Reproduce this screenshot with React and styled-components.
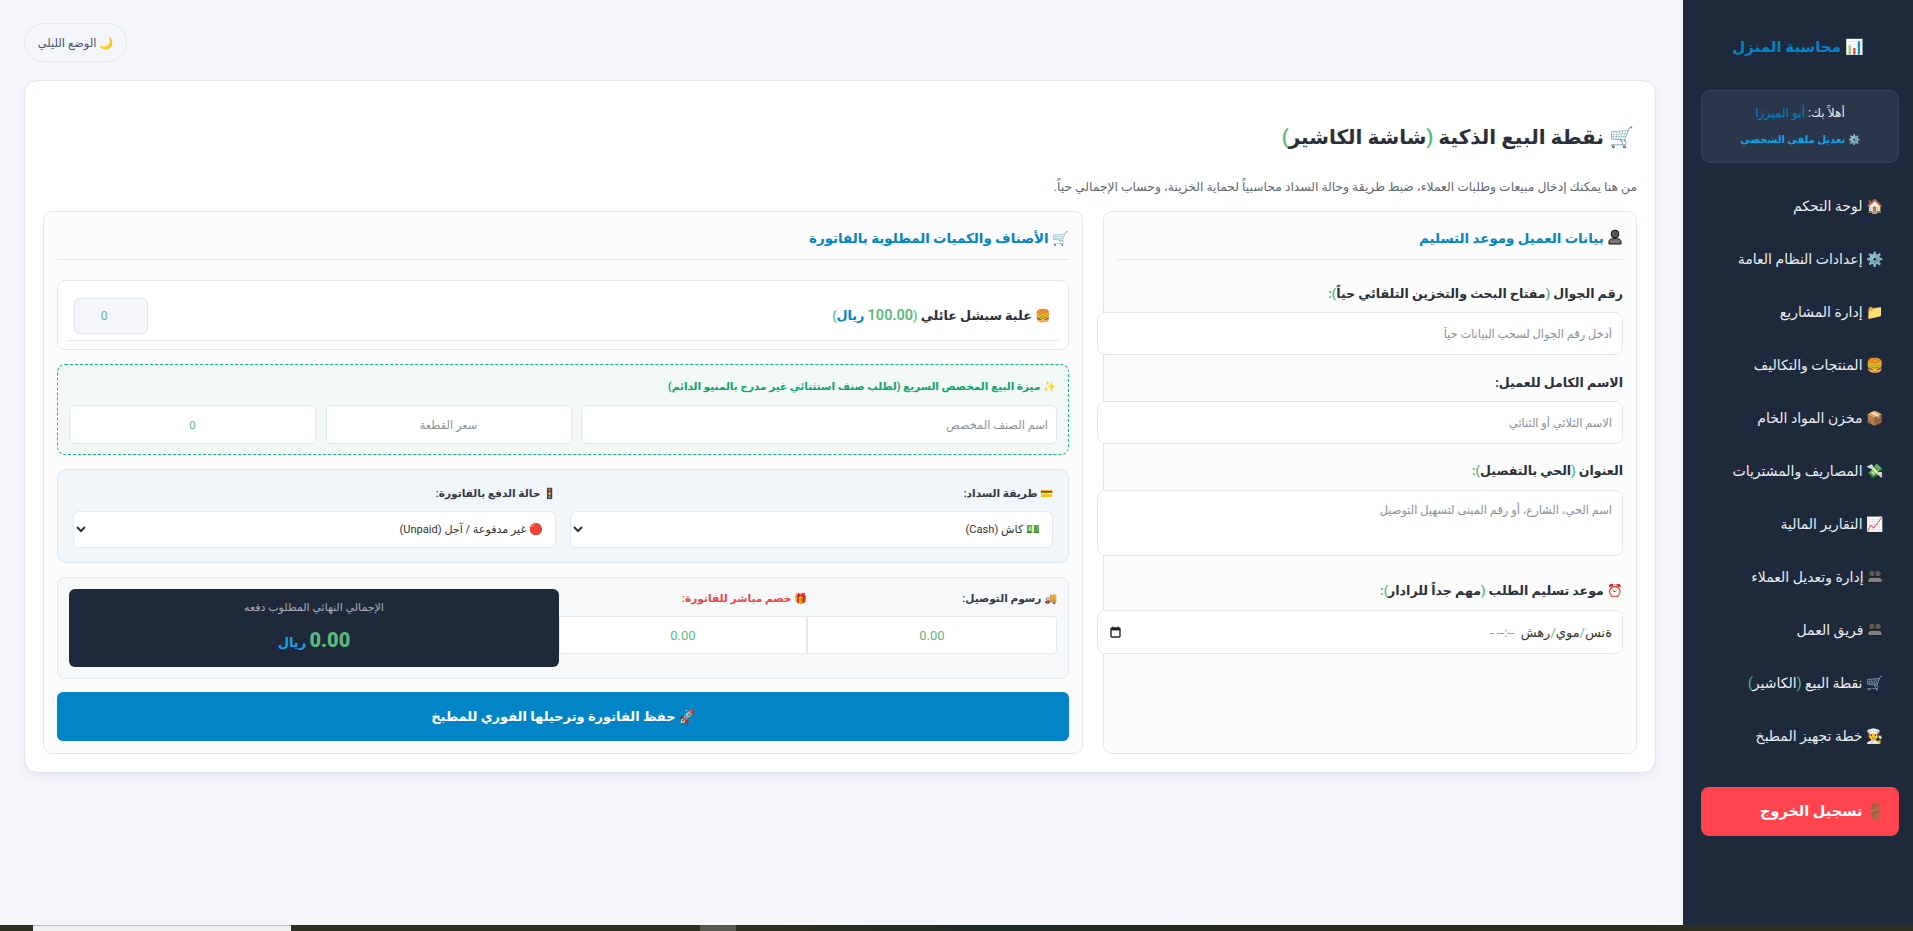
import React from 'react';
import styled, { createGlobalStyle } from 'styled-components';

const GlobalStyle = createGlobalStyle`
  html, body { margin: 0; padding: 0; height: 100%; overflow: hidden; background: #f4f6fb; }
  * { box-sizing: border-box; }
  body, input, select, textarea, button {
    font-family: Roboto, "DejaVu Sans", sans-serif;
  }
`;

const Page = styled.div`
  width: 1913px;
  height: 931px;
  display: flex;
  flex-direction: column;
`;
const Body = styled.div`
  flex: 1;
  min-height: 0;
  display: flex;
`;
const Main = styled.main`
  flex: 1;
  min-width: 0;
  padding: 23px 27px 0 24px;
  direction: rtl;
`;
const TopBar = styled.div`
  display: flex;
  justify-content: flex-end;
  margin-bottom: 18px;
`;
const ThemeToggle = styled.button`
  height: 39px;
  width: 103px;
  border: 1px solid #e2e8f0;
  border-radius: 20px;
  background: #f4f6fb;
  color: #475569;
  font-size: 11.5px;
  padding: 0;
`;
const Card = styled.section`
  background: #fff;
  border: 1px solid #e2e8f0;
  border-radius: 14px;
  box-shadow: 0 4px 10px rgba(30, 41, 59, 0.06);
  padding: 18px;
  height: 693px;
`;
const Title = styled.h1`
  margin: 22px 3px 0 0;
  height: 32px;
  font-size: 20px;
  line-height: 32px;
  font-weight: 700;
  color: #2b3038;
`;
const Sub = styled.p`
  margin: 22px 0 12px;
  height: 24px;
  font-size: 12.3px;
  line-height: 24px;
  color: #5f6773;
`;
const Columns = styled.div`
  display: grid;
  grid-template-columns: 534px 1040px;
  gap: 20px;
  height: 543px;
`;
const Col = styled.div`
  background: #fcfcfd;
  border: 1px solid #e2e8f0;
  border-radius: 9px;
  padding: 0 13px;
`;
const ColHead = styled.h2`
  margin: 0 0 ${p => p.$mb}px;
  height: 48px;
  line-height: 54px;
  font-size: 13.4px;
  font-weight: 700;
  color: #0284c7;
  border-bottom: 1px solid #e2e8f0;
`;
const Field = styled.div`
  margin-bottom: ${p => p.$mb}px;
`;
const Label = styled.label`
  display: block;
  height: 22px;
  line-height: 22px;
  margin-bottom: ${p => p.$mb || 7}px;
  font-size: 12.6px;
  font-weight: 700;
  color: #2b3038;
`;
const controlBase = `
  display: block;
  background: #fff;
  border: 1px solid #e2e8f0;
  color: #333;
  outline: none;
`;
const WideInput = styled.input`
  ${controlBase}
  width: calc(100% + 20px);
  height: 43px;
  border-radius: 8px;
  padding: 0 10px;
  font-size: 11.4px;
  &::placeholder { color: #8a8f98; opacity: 1; }
`;
const WideArea = styled.textarea`
  ${controlBase}
  width: calc(100% + 20px);
  height: 66px;
  border-radius: 8px;
  padding: 12px 10px;
  font-size: 11.4px;
  resize: none;
  &::placeholder { color: #8a8f98; opacity: 1; }
`;
const DateBox = styled.div`
  ${controlBase}
  width: calc(100% + 20px);
  height: 44px;
  border-radius: 8px;
  padding: 0 10px 0 12px;
  display: flex;
  align-items: center;
  justify-content: space-between;
  font-size: 13px;
`;
const Green = styled.span`
  color: #5cb97e;
`;
const Blue = styled.span`
  color: #0284c7;
`;
const Digits = styled(Green)`
  font-size: 14.5px;
`;
const DateDashes = styled(Green)`
  letter-spacing: 1.6px;
  margin-right: 3px;
`;
const ItemCard = styled.div`
  background: #fff;
  border: 1px solid #e2e8f0;
  border-radius: 8px;
  height: 70px;
  padding: 0 9px;
  margin-bottom: 14px;
`;
const ItemRow = styled.div`
  height: 60px;
  border-bottom: 1px solid #e2e8f0;
  padding: 10px 7px 0;
  display: flex;
  align-items: center;
  justify-content: space-between;
`;
const ItemName = styled.span`
  font-size: 12.7px;
  font-weight: 600;
  color: #2b3038;
  padding-right: 1px;
`;
const Qty = styled.input`
  ${controlBase}
  width: 74px;
  height: 36px;
  background: #f4f6fb;
  border-radius: 5px;
  text-align: center;
  padding: 0 14px 0 0;
  font-size: 12px;
  &::placeholder { color: #5cb97e; opacity: 1; }
`;
const CustomBox = styled.div`
  background: #f1f8f6;
  border: 1px dashed #10b981;
  border-radius: 8px;
  height: 91px;
  padding: 12px 11px 0;
  margin-bottom: 14px;
`;
const CustomTitle = styled.div`
  height: 20px;
  line-height: 20px;
  margin: 0 1px 8px 0;
  font-size: 10.5px;
  font-weight: 700;
  color: #10a56f;
`;
const CustomGrid = styled.div`
  display: grid;
  grid-template-columns: 476px 246px 247px;
  gap: 9.5px;
`;
const SmallInput = styled.input`
  ${controlBase}
  width: 100%;
  height: 39px;
  border-radius: 5px;
  padding: 0 8px;
  font-size: 11.4px;
  text-align: ${p => p.$align || 'center'};
  &::placeholder { color: ${p => p.$ph || '#8a8f98'}; opacity: 1; }
`;
const PayBox = styled.div`
  background: #f1f6fa;
  border: 1px solid #d6e8f3;
  border-radius: 9px;
  height: 94px;
  padding: 14px 15px 0;
  margin-bottom: 14px;
  display: grid;
  grid-template-columns: 1fr 1fr;
  gap: 14px;
`;
const SmallLabel = styled.div`
  height: 20px;
  line-height: 20px;
  margin-bottom: 7px;
  font-size: 10.6px;
  font-weight: 600;
  color: ${p => p.$color || '#333a45'};
`;
const Select = styled.select`
  ${controlBase}
  width: 100%;
  height: 37px;
  border-radius: 6px;
  padding: 0 8px;
  font-size: 11.1px;
  font-weight: 400;
`;
const TotalsBox = styled.div`
  background: #f7f8fa;
  border: 1px solid #e2e8f0;
  border-radius: 8px;
  height: 102px;
  padding: 11px 11px 0;
  margin-bottom: 13px;
  display: flex;
`;
const ChargeField = styled.div`
  flex: 0 0 ${p => p.$w}px;
`;
const ChargeInput = styled.input`
  ${controlBase}
  width: 100%;
  height: 38px;
  border-radius: ${p => p.$round};
  text-align: center;
  font-size: 13px;
  &::placeholder { color: #5cb97e; opacity: 1; }
`;
const TotalCard = styled.div`
  flex: 1;
  height: 78px;
  background: #1e293b;
  border-radius: 6px;
  position: relative;
  z-index: 1;
  text-align: center;
  padding-top: 9px;
`;
const TotalLabel = styled.div`
  font-size: 11px;
  line-height: 20px;
  color: #a6adb8;
`;
const TotalAmount = styled.div`
  margin-top: 6px;
  line-height: 32px;
  font-size: 13px;
  font-weight: 700;
  color: #0ea5e9;
  b {
    font-size: 20px;
    color: #5cb97e;
  }
`;
const SaveButton = styled.button`
  display: block;
  width: 100%;
  height: 49px;
  border: 0;
  border-radius: 6px;
  background: #0284c7;
  color: #fff;
  font-size: 13px;
  font-weight: 700;
`;
const Sidebar = styled.aside`
  flex: 0 0 230px;
  background: #1e293b;
  direction: rtl;
  padding: 0 14px;
  color: #e8edf3;
`;
const Brand = styled.div`
  height: 90px;
  line-height: 94px;
  text-align: center;
  font-size: 15px;
  font-weight: 700;
  color: #0284c7;
`;
const UserBox = styled.div`
  width: 198px;
  height: 73px;
  margin-bottom: 17px;
  padding-top: 11px;
  background: #2a3649;
  border: 1px solid #35425a;
  border-radius: 9px;
  text-align: center;
  font-size: 12.2px;
  line-height: 22px;
`;
const EditLink = styled.div`
  margin-top: 5px;
  font-size: 10px;
  font-weight: 700;
  color: #0ea5e9;
`;
const NavList = styled.nav`
  display: flex;
  flex-direction: column;
`;
const NavItem = styled.a`
  height: 53px;
  line-height: 53px;
  padding-right: 16px;
  font-size: 14px;
  color: #e8edf3;
  white-space: nowrap;
`;
const Logout = styled.button`
  display: block;
  width: 198px;
  height: 49px;
  margin-top: 24px;
  padding: 0 15px;
  border: 0;
  border-radius: 8px;
  background: #ff444f;
  color: #fff;
  font-size: 14.5px;
  font-weight: 700;
  text-align: right;
`;
const Strip = styled.div`
  flex: 0 0 6px;
  display: flex;
  background: linear-gradient(90deg, #2d3020 0%, #2d3020 40%, #1c2a26 52%, #262a1c 65%, #2f3020 100%);
`;
const StripTab = styled.div`
  width: ${p => p.$w}px;
  margin-left: ${p => p.$ml}px;
  background: ${p => p.$bg};
  border-top: ${p => (p.$line ? '1px solid #bbb' : '0')};
`;
const Glyph = styled.svg`
  width: ${p => p.$s}px;
  height: ${p => p.$s}px;
  vertical-align: -2px;
`;

// silhouettes in the reference are dark, the installed emoji ones are blue
const PersonIcon = ({ s = 16 }) => (
  <Glyph $s={s} viewBox="0 0 16 16">
    <circle cx="8" cy="5" r="3.9" fill="#555" stroke="#111" strokeWidth="1" />
    <path d="M2 15v-2.5C2 10.5 4 9.5 8 9.5s6 1 6 3V15z" fill="#777" stroke="#111" strokeWidth="1" />
  </Glyph>
);

const GroupIcon = ({ s = 16 }) => (
  <Glyph $s={s} viewBox="0 0 16 16">
    <circle cx="5" cy="5.500" r="3.400" fill="#5a5a5a" stroke="#111" strokeWidth=".8" />
    <circle cx="11" cy="5.500" r="3.400" fill="#5a5a5a" stroke="#111" strokeWidth=".8" />
    <path d="M.8 14.500v-2.200c0-2 1.800-3 4.200-3h6c2.400 0 4.200 1 4.200 3v2.200z" fill="#808080" stroke="#111" strokeWidth=".8" />
  </Glyph>
);

const CalendarIcon = () => (
  <svg width="11" height="12" viewBox="0 0 11 12" fill="none">
    <rect x="1" y="2" width="9" height="9" rx="1" stroke="#222" strokeWidth="1.4" />
    <rect x="1" y="2" width="9" height="2.4" fill="#222" />
    <path d="M3 .5v2M8 .5v2" stroke="#222" strokeWidth="1.2" />
  </svg>
);

const menu = [
  '🏠 لوحة التحكم',
  '⚙️ إعدادات النظام العامة',
  '📁 إدارة المشاريع',
  '🍔 المنتجات والتكاليف',
  '📦 مخزن المواد الخام',
  '💸 المصاريف والمشتريات',
  '📈 التقارير المالية',
  <><GroupIcon /> إدارة وتعديل العملاء</>,
  <><GroupIcon /> فريق العمل</>,
  <>🛒 نقطة البيع <Green>(</Green>الكاشير<Green>)</Green></>,
  '👨‍🍳 خطة تجهيز المطبخ',
];

export default function App() {
  return (
    <Page>
      <GlobalStyle />
      <Body>
        <Main>
          <TopBar><ThemeToggle>🌙 الوضع الليلي</ThemeToggle></TopBar>
          <Card>
            <Title>🛒 نقطة البيع الذكية <Green>(</Green>شاشة الكاشير<Green>)</Green></Title>
            <Sub>من هنا يمكنك إدخال مبيعات وطلبات العملاء، ضبط طريقة وحالة السداد محاسبياً لحماية الخزينة، وحساب الإجمالي حياً.</Sub>
            <Columns>
              <Col>
                <ColHead $mb={23}><PersonIcon /> بيانات العميل وموعد التسليم</ColHead>
                <Field $mb={17}>
                  <Label>رقم الجوال <Green>(</Green>مفتاح البحث والتخزين التلقائي حياً<Green>):</Green></Label>
                  <WideInput placeholder="أدخل رقم الجوال لسحب البيانات حياً" />
                </Field>
                <Field $mb={16}>
                  <Label>الاسم الكامل للعميل:</Label>
                  <WideInput placeholder="الاسم الثلاثي أو الثنائي" />
                </Field>
                <Field $mb={24}>
                  <Label $mb={8}>العنوان <Green>(</Green>الحي بالتفصيل<Green>):</Green></Label>
                  <WideArea placeholder="اسم الحي، الشارع، أو رقم المبنى لتسهيل التوصيل" />
                </Field>
                <Field>
                  <Label $mb={8}>⏰ موعد تسليم الطلب <Green>(</Green>مهم جداً للرادار<Green>):</Green></Label>
                  <DateBox>
                    <span>ةنس<Green>/</Green>موي<Green>/</Green>رهش <DateDashes>--:-- -</DateDashes></span>
                    <CalendarIcon />
                  </DateBox>
                </Field>
              </Col>
              <Col>
                <ColHead $mb={20}>🛒 الأصناف والكميات المطلوبة بالفاتورة</ColHead>
                <ItemCard>
                  <ItemRow>
                    <ItemName>🍔 علبة سبشل عائلي <Green>(</Green><Digits>100.00</Digits> <Blue>ريال</Blue><Green>)</Green></ItemName>
                    <Qty placeholder="0" />
                  </ItemRow>
                </ItemCard>
                <CustomBox>
                  <CustomTitle>✨ ميزة البيع المخصص السريع (لطلب صنف استثنائي غير مدرج بالمنيو الدائم)</CustomTitle>
                  <CustomGrid>
                    <SmallInput $align="right" placeholder="اسم الصنف المخصص" />
                    <SmallInput placeholder="سعر القطعة" />
                    <SmallInput $ph="#5cb97e" placeholder="0" />
                  </CustomGrid>
                </CustomBox>
                <PayBox>
                  <div>
                    <SmallLabel>💳 طريقة السداد:</SmallLabel>
                    <Select defaultValue="cash">
                      <option value="cash">💵 كاش (Cash)</option>
                    </Select>
                  </div>
                  <div>
                    <SmallLabel>🚦 حالة الدفع بالفاتورة:</SmallLabel>
                    <Select defaultValue="unpaid">
                      <option value="unpaid">🔴 غير مدفوعة / آجل (Unpaid)</option>
                    </Select>
                  </div>
                </PayBox>
                <TotalsBox>
                  <ChargeField $w={250}>
                    <SmallLabel>🚚 رسوم التوصيل:</SmallLabel>
                    <ChargeInput $round="0 4px 4px 0" placeholder="0.00" />
                  </ChargeField>
                  <ChargeField $w={248}>
                    <SmallLabel $color="#ef4444">🎁 خصم مباشر للفاتورة:</SmallLabel>
                    <ChargeInput $round="0" placeholder="0.00" />
                  </ChargeField>
                  <TotalCard>
                    <TotalLabel>الإجمالي النهائي المطلوب دفعه</TotalLabel>
                    <TotalAmount><b>0.00</b> ريال</TotalAmount>
                  </TotalCard>
                </TotalsBox>
                <SaveButton>🚀 حفظ الفاتورة وترحيلها الفوري للمطبخ</SaveButton>
              </Col>
            </Columns>
          </Card>
        </Main>
        <Sidebar>
          <Brand>📊 محاسبة المنزل</Brand>
          <UserBox>
            أهلاً بك: <Blue>أبو الميرزا</Blue>
            <EditLink>⚙️ تعديل ملفي الشخصي</EditLink>
          </UserBox>
          <NavList>
            {menu.map((item, i) => <NavItem key={i}>{item}</NavItem>)}
          </NavList>
          <Logout>🚪 تسجيل الخروج</Logout>
        </Sidebar>
      </Body>
      <Strip>
        <StripTab $ml={33} $w={258} $bg="#f0f0f0" $line />
        <StripTab $ml={409} $w={36} $bg="#56594b" />
      </Strip>
    </Page>
  );
}
